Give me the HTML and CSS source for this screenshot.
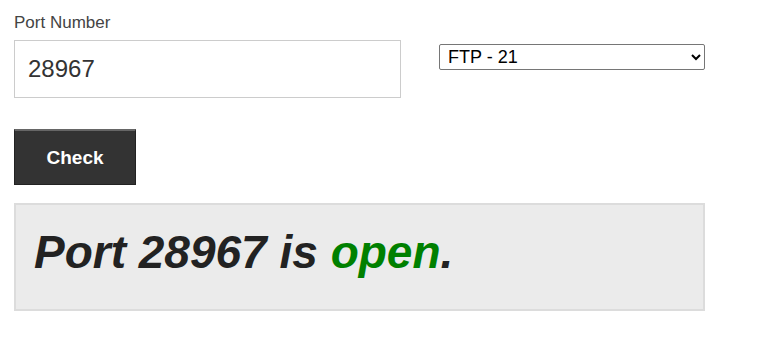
FILE: index.html
```html
<!DOCTYPE html>
<html>
<head>
<meta charset="utf-8">
<link rel="stylesheet" href="styles.css">
</head>
<body>
<div class="page">
  <div class="row">
    <div class="field">
      <label class="label" for="port">Port Number</label>
      <input id="port" class="port-input" type="text" value="28967">
    </div>
    <div class="select-wrap">
      <select class="service">
        <option>FTP - 21</option>
        <option>SSH - 22</option>
        <option>HTTP - 80</option>
      </select>
    </div>
  </div>
  <button class="check-btn" type="button">Check</button>
  <div class="result">Port 28967 is&nbsp;<span class="open">open</span>.</div>
</div>
</body>
</html>
```

FILE: styles.css
```css
html, body {
  margin: 0;
  padding: 0;
  background: #fff;
}
.page {
  padding: 13px 14px;
  font-family: "Liberation Sans", Arial, sans-serif;
  width: 691px;
}
.row {
  display: flex;
  align-items: flex-start;
  gap: 38px;
}
.field {
  display: flex;
  flex-direction: column;
}
.label {
  font-size: 17px;
  line-height: 20px;
  color: #444;
  margin-bottom: 7px;
}
.port-input {
  box-sizing: border-box;
  width: 387px;
  height: 58px;
  border: 1px solid #ccc;
  padding: 0 13px;
  font-family: "Liberation Sans", Arial, sans-serif;
  font-size: 24px;
  color: #333;
  outline: none;
}
.select-wrap {
  padding-top: 31px;
}
.service {
  box-sizing: border-box;
  width: 266px;
  height: 26px;
  padding-left: 4px;
  font-family: "Liberation Sans", Arial, sans-serif;
  font-size: 18px;
  color: #000;
  background: #fff;
  border: 1px solid #767676;
  border-radius: 2px;
}
.check-btn {
  display: block;
  box-sizing: border-box;
  margin-top: 31px;
  width: 122px;
  height: 56px;
  background: #333;
  border: 1px solid #222;
  border-top: 2px solid #666;
  color: #fff;
  font-family: "Liberation Sans", Arial, sans-serif;
  font-weight: bold;
  font-size: 19px;
  padding: 0;
}
.result {
  box-sizing: border-box;
  margin-top: 18px;
  width: 691px;
  height: 108px;
  background: #ebebeb;
  border: 2px solid #dcdcdc;
  padding: 0 18px 10px;
  display: flex;
  align-items: center;
  font-size: 46px;
  font-weight: bold;
  font-style: italic;
  color: #222;
}
.open {
  color: #008000;
}
```
